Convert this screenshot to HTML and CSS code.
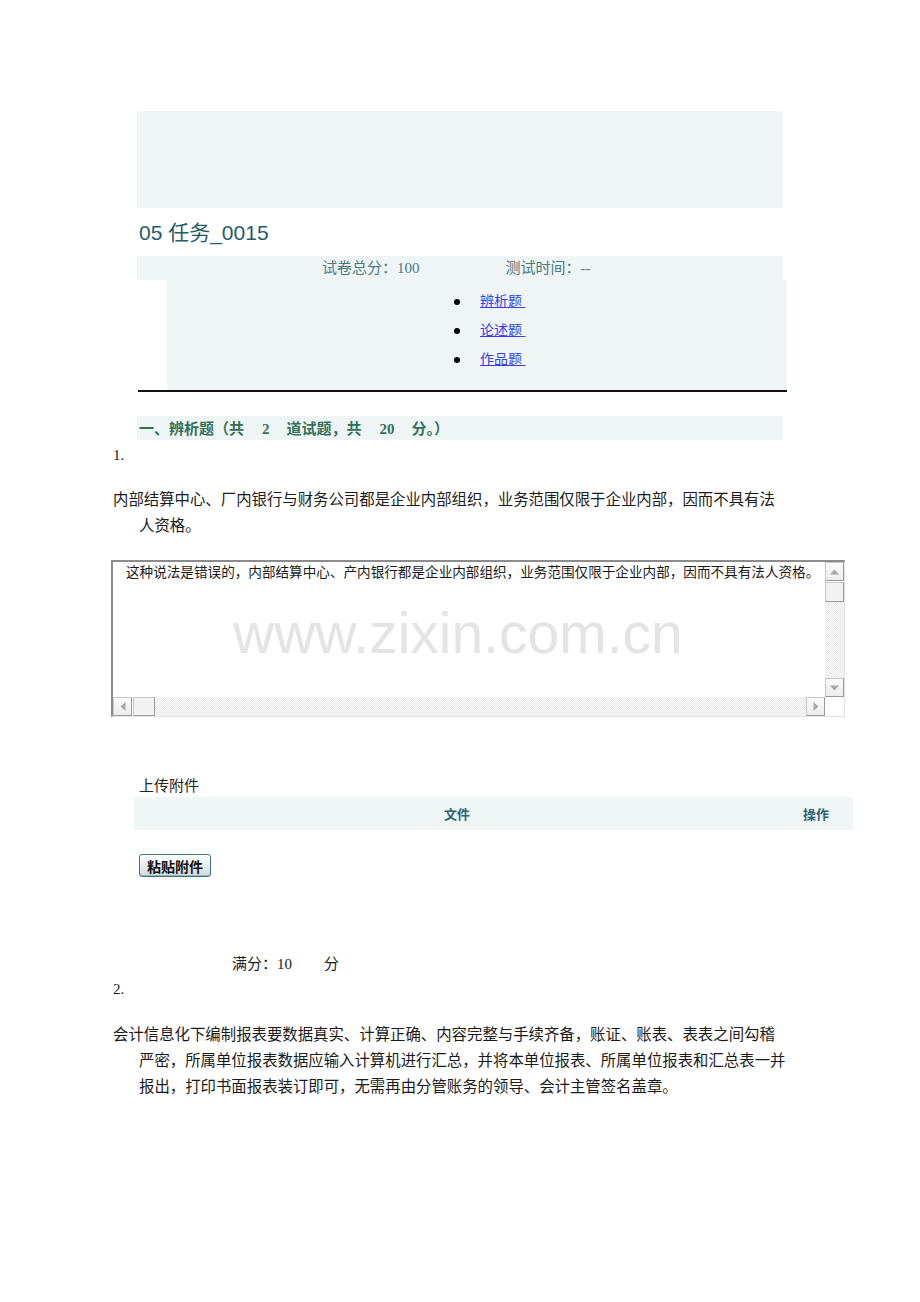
FILE: index.html
```html
<!DOCTYPE html>
<html lang="zh-CN">
<head>
<meta charset="utf-8">
<title>05任务_0015</title>
<link rel="stylesheet" href="styles.css">
</head>
<body>
<div class="page">
  <div class="topbox"></div>
  <h1 class="title">05 任务_0015</h1>
  <div class="infobar"><span>试卷总分：100</span><span>测试时间：--</span></div>
  <div class="listbox">
    <ul class="toc">
      <li><a href="#s1">辨析题&nbsp;</a></li>
      <li><a href="#s2">论述题&nbsp;</a></li>
      <li><a href="#s3">作品题&nbsp;</a></li>
    </ul>
  </div>
  <div class="rule"></div>
  <div class="section" id="s1">一、辨析题（共<span class="num">2</span>道试题，共<span class="num">20</span>分。）</div>
  <div class="qnum">1.</div>
  <div class="qtext">内部结算中心、厂内银行与财务公司都是企业内部组织，业务范围仅限于企业内部，因而不具有法<br>人资格。</div>
  <div class="answer">
    <div class="answer-main">
      <div class="answer-text">这种说法是错误的，内部结算中心、产内银行都是企业内部组织，业务范围仅限于企业内部，因而不具有法人资格。</div>
      <div class="vscroll">
        <div class="sbtn"><svg width="9" height="6" viewBox="0 0 9 6"><path d="M0 5.5 L4.5 0.5 L9 5.5 Z" fill="#a8a8a8"/></svg></div>
        <div class="vthumb"></div>
        <div class="track"></div>
        <div class="sbtn"><svg width="9" height="6" viewBox="0 0 9 6"><path d="M0 0.5 L4.5 5.5 L9 0.5 Z" fill="#a8a8a8"/></svg></div>
      </div>
    </div>
    <div class="answer-bottom">
      <div class="hscroll">
        <div class="sbtn"><svg width="6" height="9" viewBox="0 0 6 9"><path d="M5.5 0 L0.5 4.5 L5.5 9 Z" fill="#a8a8a8"/></svg></div>
        <div class="hthumb"></div>
        <div class="track"></div>
        <div class="sbtn"><svg width="6" height="9" viewBox="0 0 6 9"><path d="M0.5 0 L5.5 4.5 L0.5 9 Z" fill="#a8a8a8"/></svg></div>
      </div>
      <div class="corner"></div>
    </div>
    <div class="watermark">www.zixin.com.cn</div>
  </div>
  <div class="upload-label">上传附件</div>
  <div class="filehead"><span class="col-file">文件</span><span class="col-op">操作</span></div>
  <button class="paste-btn" type="button">粘贴附件</button>
  <div class="score">满分：10<span class="unit">分</span></div>
  <div class="qnum qnum2">2.</div>
  <div class="qtext qtext2">会计信息化下编制报表要数据真实、计算正确、内容完整与手续齐备，账证、账表、表表之间勾稽<br>严密，所属单位报表数据应输入计算机进行汇总，并将本单位报表、所属单位报表和汇总表一并<br>报出，打印书面报表装订即可，无需再由分管账务的领导、会计主管签名盖章。</div>
</div>
</body>
</html>
```

FILE: styles.css
```css
html, body {
  margin: 0;
  padding: 0;
  background: #ffffff;
}
body {
  font-family: "Liberation Serif", "Noto Sans CJK SC", serif;
  color: #1a1a1a;
}
.page {
  padding-top: 111px;
  padding-bottom: 100px;
}
.topbox {
  margin-left: 137px;
  width: 646px;
  height: 97px;
  background: #eff5f5;
}
.title {
  margin: 0 0 0 139px;
  height: 48px;
  line-height: 50px;
  font-family: "Liberation Sans", "Noto Sans CJK SC", sans-serif;
  font-weight: normal;
  font-size: 21px;
  color: #1f5c69;
}
.infobar {
  margin-left: 137px;
  width: 646px;
  height: 24px;
  background: #eff5f5;
  display: flex;
  gap: 86px;
  padding-left: 185px;
  box-sizing: border-box;
  font-size: 15px;
  line-height: 24px;
  color: #4a7a7f;
}
.listbox {
  margin-left: 167px;
  width: 620px;
  height: 110px;
  background: #eff5f5;
}
.toc {
  list-style: none;
  margin: 0;
  padding: 7px 0 0 313px;
}
.toc li {
  position: relative;
  height: 29px;
  line-height: 29px;
  font-size: 14px;
}
.toc li::before {
  content: "";
  position: absolute;
  left: -26px;
  top: 12px;
  width: 6px;
  height: 6px;
  border-radius: 50%;
  background: #000;
}
.toc a {
  color: #3b3bf5;
  text-decoration: underline;
}
.rule {
  margin-left: 138px;
  width: 649px;
  height: 2px;
  background: #111;
}
.section {
  margin: 24px 0 0 137px;
  width: 646px;
  height: 24px;
  box-sizing: border-box;
  padding-left: 2px;
  background: #eff5f5;
  font-size: 15px;
  font-weight: bold;
  line-height: 26px;
  color: #33705a;
}
.section .num {
  margin: 0 17px 0 18px;
}
.qnum {
  margin-left: 113px;
  margin-top: 2px;
  font-size: 15px;
  line-height: 26px;
}
.qtext {
  margin: 19px 0 0 113px;
  padding-left: 26px;
  text-indent: -26px;
  font-size: 15.4px;
  line-height: 26px;
  white-space: nowrap;
}
.answer {
  position: relative;
  margin: 21px 0 0 111px;
  width: 734px;
  height: 157px;
  box-sizing: border-box;
  border-top: 2px solid #8c8c8c;
  border-left: 2px solid #8c8c8c;
  border-right: 1px solid #e2e2e2;
  border-bottom: 1px solid #e2e2e2;
  display: flex;
  flex-direction: column;
  background: #fff;
}
.answer-main {
  flex: 1;
  display: flex;
  min-height: 0;
}
.answer-text {
  flex: 1;
  padding: 2px 0 0 13px;
  font-size: 13.6px;
  line-height: 18px;
  white-space: nowrap;
  overflow: hidden;
}
.vscroll {
  width: 19px;
  display: flex;
  flex-direction: column;
}
.hscroll {
  flex: 1;
  display: flex;
  height: 19px;
}
.answer-bottom {
  display: flex;
  height: 19px;
}
.corner {
  width: 19px;
  background: #fff;
}
.sbtn {
  width: 19px;
  height: 19px;
  box-sizing: border-box;
  background: linear-gradient(#fbfbfb, #ececec);
  border: 1px solid #c8c8c8;
  border-right-color: #9a9a9a;
  border-bottom-color: #9a9a9a;
  display: flex;
  align-items: center;
  justify-content: center;
}
.vthumb {
  height: 20px;
  margin-top: 1px;
  box-sizing: border-box;
  background: #f2f2f2;
  border: 1px solid #c8c8c8;
  border-right-color: #9a9a9a;
  border-bottom-color: #9a9a9a;
}
.hthumb {
  width: 22px;
  margin-left: 1px;
  box-sizing: border-box;
  background: #f2f2f2;
  border: 1px solid #c8c8c8;
  border-right-color: #9a9a9a;
  border-bottom-color: #9a9a9a;
}
.track {
  flex: 1;
  background-color: #f6f6f6;
  background-image:
    linear-gradient(45deg, #ececec 25%, transparent 25%, transparent 75%, #ececec 75%),
    linear-gradient(45deg, #ececec 25%, transparent 25%, transparent 75%, #ececec 75%);
  background-size: 2px 2px;
  background-position: 0 0, 1px 1px;
}
.watermark {
  position: absolute;
  left: 120px;
  top: 38px;
  font-family: "Liberation Sans", sans-serif;
  font-size: 57px;
  line-height: 66px;
  color: #e4e4e4;
  letter-spacing: 0;
  pointer-events: none;
}
.upload-label {
  margin: 60px 0 0 139px;
  font-size: 15px;
  line-height: 18px;
  color: #222;
}
.filehead {
  margin: 2px 0 0 134px;
  width: 719px;
  height: 33px;
  background: #f0f6f6;
  position: relative;
  font-family: "Noto Sans CJK SC", "Liberation Sans", sans-serif;
  font-size: 13px;
  font-weight: bold;
  line-height: 33px;
  color: #2b6373;
}
.col-file {
  position: absolute;
  left: 310px;
}
.col-op {
  position: absolute;
  left: 669px;
}
.paste-btn {
  display: block;
  margin: 24px 0 0 139px;
  width: 72px;
  height: 23px;
  padding: 0;
  border: 1px solid #3f7582;
  border-radius: 3px;
  background: linear-gradient(#ffffff, #e6ecee 60%, #cdd7da);
  box-shadow: inset 0 -1px 0 #9fb4ba;
  font-family: "Noto Sans CJK SC", sans-serif;
  font-size: 14px;
  font-weight: bold;
  line-height: 20px;
  color: #111;
}
.score {
  margin: 78px 0 0 232px;
  font-size: 15px;
  line-height: 18px;
}
.score .unit {
  margin-left: 32px;
}
.qnum2 {
  margin-top: 3px;
}
.qtext2 {
  margin-top: 20px;
}
```
